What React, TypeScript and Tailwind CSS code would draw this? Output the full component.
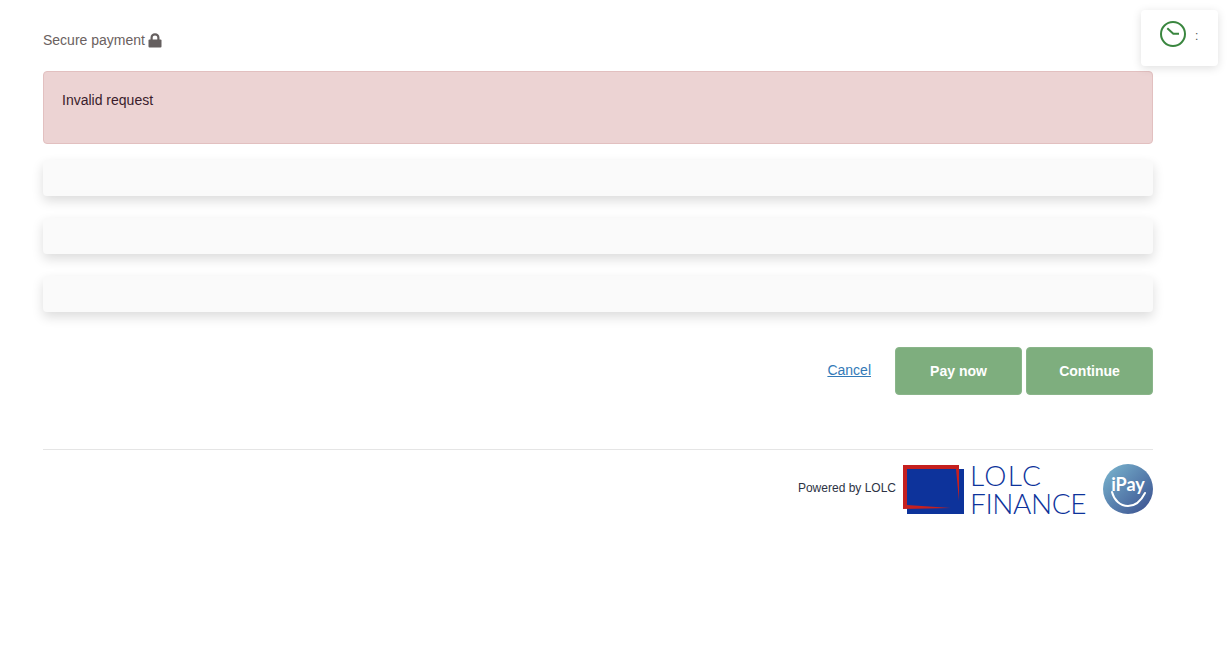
export default function App() {
  return (
    <div className="relative min-h-[646px] bg-white font-['Liberation_Sans',Arial,sans-serif] text-sm">
      {/* timer card */}
      <div className="absolute left-[1141px] top-[10px] flex h-[56px] w-[77px] rounded-[4px] bg-white pl-[18px] pt-[10px] shadow-[0_2px_10px_rgba(0,0,0,0.13)]">
        <svg width="28" height="28" viewBox="0 0 28 28" fill="none" stroke="#3a863f" strokeWidth="2">
          <circle cx="14" cy="14" r="12" />
          <path d="M8.3 8.3 L14.3 13.7 H20" />
        </svg>
        <span className="ml-[8px] mt-[7px] text-xs leading-[18px] text-[#555]">:</span>
      </div>

      <div className="ml-[43px] w-[1110px] pt-[31px]">
        <div className="flex h-[18px] items-center text-[14px] text-[#6b6160]">
          <span>Secure payment</span>
          <svg className="ml-[3px]" width="14" height="15" viewBox="0 0 14 15" fill="#655f5f">
            <path d="M2.5 7 V4.8 C2.5 1.8 4.4 .3 7 .3 S11.5 1.8 11.5 4.8 V7 H9.3 V4.8 C9.3 3.3 8.4 2.6 7 2.6 S4.7 3.3 4.7 4.8 V7 Z" />
            <rect x="0.5" y="6.5" width="13" height="8" rx="1" />
          </svg>
        </div>

        <div className="mt-[22px] h-[73px] rounded-[4px] border border-[#e2c0c0] bg-[#ecd3d3] px-[18px] pt-[19px] text-[14px] leading-[18px] text-[#3a1c2c]">
          Invalid request
        </div>

        <div className="mt-[16px] flex flex-col gap-[22px]">
          <div className="h-[36px] rounded-[4px] bg-[#fafafa] shadow-[0_5px_12px_rgba(0,0,0,0.14)]" />
          <div className="h-[36px] rounded-[4px] bg-[#fafafa] shadow-[0_5px_12px_rgba(0,0,0,0.14)]" />
          <div className="h-[36px] rounded-[4px] bg-[#fafafa] shadow-[0_5px_12px_rgba(0,0,0,0.14)]" />
        </div>

        <div className="mt-[35px] flex items-center justify-end">
          <a href="#" className="mb-[2px] mr-[24px] text-[14px] text-[#337ab7] underline">Cancel</a>
          <button className="h-[48px] w-[127px] rounded-[4px] border border-[#8ab58a] bg-[#7eae7e] text-[14px] font-bold text-white">Pay now</button>
          <button className="ml-[4px] h-[48px] w-[127px] rounded-[4px] border border-[#8ab58a] bg-[#7eae7e] text-[14px] font-bold text-white">Continue</button>
        </div>

        <div className="mt-[54px] flex items-start justify-end border-t border-[#e5e5e5] pt-[14px]">
          <span className="mr-[7px] mt-[17px] text-xs leading-[14px] text-[#2d3345]">Powered by LOLC</span>

          {/* LOLC Finance logo */}
          <svg width="61" height="49" viewBox="0 0 61 49" className="mt-[1px]">
            <rect x="4" y="4" width="57" height="45" fill="#0d339b" />
            <path d="M0 0 H56 V36 L53 4 H4 V40 L48 43 L0 44 Z" fill="#c5201f" />
          </svg>
          <div className="-mt-[3px] ml-[6px] mr-[18px] flex w-[115px] flex-col font-['Lato',sans-serif] text-[28px] font-light leading-[28px] text-[#0d339b]">
            <span className="h-[28px] tracking-[1.3px]">LOLC</span>
            <span className="h-[28px] tracking-[-0.4px]">FINANCE</span>
          </div>

          {/* iPay badge */}
          <div className="relative flex h-[50px] w-[50px] flex-col items-center rounded-full bg-gradient-to-br from-[#7db9d0] to-[#3a4d8d] pt-[10px]">
            <span className="font-['Lato',sans-serif] text-[18px] font-bold leading-[20px] text-white">iPay</span>
            <svg width="50" height="50" viewBox="0 0 50 50" fill="none" stroke="#fff" strokeWidth="2" className="absolute left-0 top-0">
              <path d="M9 28 C11 36 17 42 25 42 S38 37 42 29" strokeLinecap="round" />
            </svg>
          </div>
        </div>
      </div>
    </div>
  );
}
